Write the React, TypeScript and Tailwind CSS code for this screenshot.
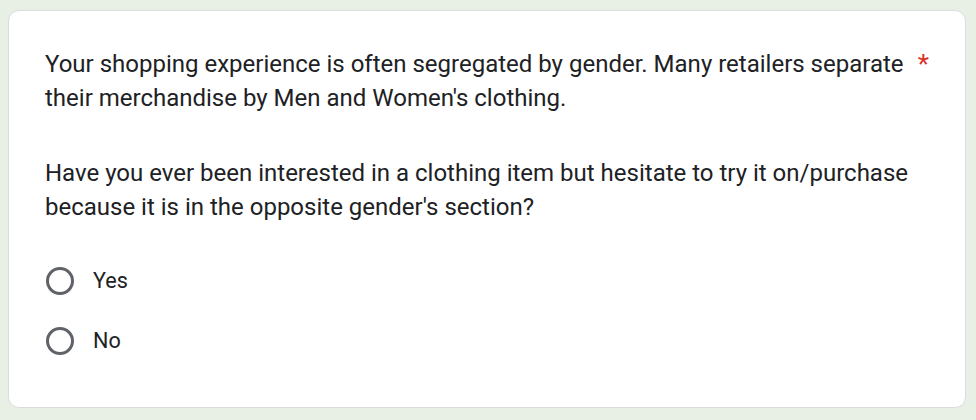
import React from "react";

function Radio({ label }: { label: string }) {
  return (
    <div className="flex items-center h-[60px]">
      <div className="w-[28px] h-[28px] rounded-full border-[3px] border-[#5f6368] shrink-0" />
      <span className="ml-[19px] text-[21.6px] leading-[28px] text-[#202124]">{label}</span>
    </div>
  );
}

export default function App() {
  return (
    <div
      className="w-[976px] h-[420px] bg-[#e8f0e6] pt-[10px] pl-[8px] pr-[10px] pb-[12px]"
      style={{ fontFamily: "Roboto, 'Liberation Sans', sans-serif" }}
    >
      <div className="h-full bg-white border border-[#dadce0] rounded-[11px] pl-[36px] pr-[36px] pt-[36px]">
        <div className="flex text-[24px] leading-[34px] text-[#202124]">
          <div className="flex-1">
            <p>
              Your shopping experience is often segregated by gender. Many retailers separate their merchandise by Men and
              Women's clothing.
            </p>
            <p className="mt-[41px]">
              Have you ever been interested in a clothing item but hesitate to try it on/purchase because it is in the
              opposite gender's section?
            </p>
          </div>
          <span className="pl-[8px] text-[26px] text-[#d93025]">*</span>
        </div>
        <div className="mt-[27px] pl-[1px]">
          <Radio label="Yes" />
          <Radio label="No" />
        </div>
      </div>
    </div>
  );
}
